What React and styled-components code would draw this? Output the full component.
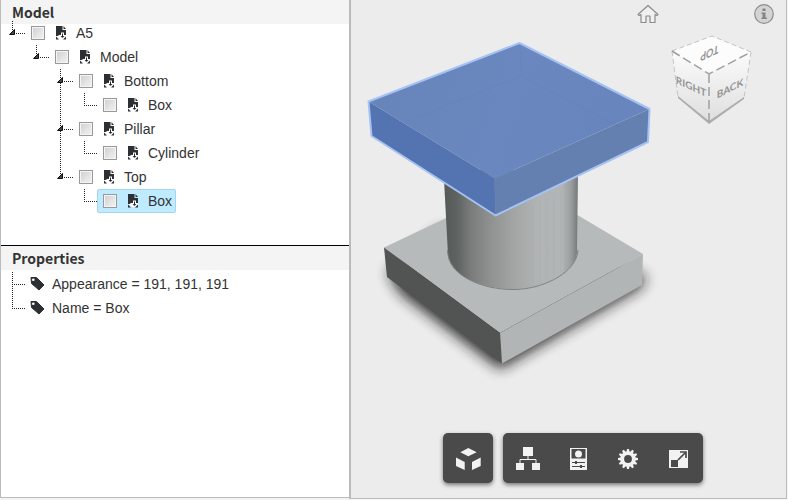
import React, { useState } from 'react';
import styled, { createGlobalStyle, css } from 'styled-components';

const tree = [
    { id: 'a5', label: 'A5', children: [
        { id: 'model', label: 'Model', children: [
            { id: 'bottom', label: 'Bottom', children: [{ id: 'bottom-box', label: 'Box' }] },
            { id: 'pillar', label: 'Pillar', children: [{ id: 'cylinder', label: 'Cylinder' }] },
            { id: 'top', label: 'Top', children: [{ id: 'top-box', label: 'Box' }] },
        ] },
    ] },
];

const properties = ['Appearance = 191, 191, 191', 'Name = Box'];

const PartIcon = () => (
    <svg width="12" height="14" viewBox="0 0 12 14" aria-hidden="true">
        <path d="M1 0H7.500V4H11V10H1Z" fill="#2d3033" />
        <path d="M8.500 0L11 3H8.500Z" fill="#2d3033" />
        <path d="M6 6.500H9V9H11V11L8 13H5L2 10.500L4 9H6Z" fill="#fff" />
        <path d="M7 7.500H8V10H9.500L7.500 12L5.500 10H7Z" fill="#2d3033" />
        <path d="M1 10.500L4 13.500H1ZM11 10.500V13.500H8Z" fill="#2d3033" />
    </svg>
);

const TagIcon = () => (
    <svg width="15" height="15" viewBox="0 0 15 15" aria-hidden="true">
        <path d="M1 1.500L6.500 1.500L14 9L9 14L1.500 7.500Z" fill="#2d3033" stroke="#2d3033" strokeLinejoin="round" />
        <circle cx="3.300" cy="3.800" r="1.300" fill="#fff" />
    </svg>
);

const TreeNode = ({ node, selected, onSelect }) => {
    const [open, setOpen] = useState(true);

    return (
        <Item>
            {node.children && (
                <Toggle type="button" aria-label={`Toggle ${node.label}`} aria-expanded={open} onClick={() => setOpen(!open)}>
                    <svg width="6" height="6" viewBox="0 0 6 6">
                        <path d="M5.500 .5V5.500H.5Z" fill="#444" stroke="#111" />
                    </svg>
                </Toggle>
            )}
            <Node $selected={selected === node.id} onClick={() => onSelect(node.id)}>
                <Check type="checkbox" id={node.id} />
                <PartIcon />
                <NodeLabel htmlFor={node.id}>{node.label}</NodeLabel>
            </Node>
            {node.children && open && (
                <List>
                    {node.children.map(child => (
                        <TreeNode key={child.id} node={child} selected={selected} onSelect={onSelect} />
                    ))}
                </List>
            )}
        </Item>
    );
};

const Scene = () => (
    <SceneSvg viewBox="351 0 435 498" role="img" aria-label="Pillar model">
        <defs>
            <linearGradient id="pillarFill" x1="444" x2="578" y1="0" y2="0" gradientUnits="userSpaceOnUse">
                <stop offset="0" stopColor="#555957" />
                <stop offset=".1" stopColor="#5f6361" />
                <stop offset=".2" stopColor="#797c7b" />
                <stop offset=".35" stopColor="#8f9291" />
                <stop offset=".52" stopColor="#a2a5a4" />
                <stop offset=".7" stopColor="#b1b4b4" />
                <stop offset=".88" stopColor="#b2b5b5" />
                <stop offset=".95" stopColor="#999c9c" />
                <stop offset="1" stopColor="#747777" />
            </linearGradient>
            <linearGradient id="slabTop" x1="400" x2="600" y1="80" y2="150" gradientUnits="userSpaceOnUse">
                <stop offset="0" stopColor="#6785ba" />
                <stop offset=".5" stopColor="#6a88bf" />
                <stop offset="1" stopColor="#6885bd" />
            </linearGradient>
            <filter id="soft" x="-20%" y="-20%" width="140%" height="150%">
                <feGaussianBlur stdDeviation="7" />
            </filter>
        </defs>

        {/* ground shadow */}
        <path d="M388 272L400 293L500 369L640 288L646 278L560 230H440Z" fill="#1c1c1c" opacity=".9" filter="url(#soft)" />

        {/* base */}
        <path d="M384 247.500L522 182L643 254L500 333Z" fill="#b7baba" />
        <path d="M384 247.500L500 333L502 363.500L387 277Z" fill="#515452" />
        <path d="M500 333L643 254L642 285L502 363.500Z" fill="#b1b5b5" />

        {/* pillar */}
        <path d="M443.500 170L448 255C450 276 482 289 513 289C544 289 576 272 577 252L578 170Z" fill="url(#pillarFill)" />
        <path d="M447.500 250C448 276 482 289.500 513 289.500C544 289.500 577 272 578 250" fill="none" stroke="#7e8181" />
        <g stroke="#a8abab" strokeWidth="1" opacity=".5">
            <path d="M526 208V288M533 204V287M540 201V286M547 198V283M554 194V280M561 190V275M568 188V269" />
        </g>

        {/* selected top */}
        <path d="M368.500 101.500L519.500 43L649.500 109L494.500 178.500Z" fill="url(#slabTop)" />
        <path d="M368.500 101.500L494.500 178.500L495.500 215.500L371.500 136Z" fill="#5473b1" />
        <path d="M494.500 178.500L649.500 109L648 142L495.500 215.500Z" fill="#6480b1" />
        <path d="M520 43L521 76L371 136M521 76L648 142" fill="none" stroke="#5a79b2" opacity=".15" />
        <path d="M368.500 101.500L519.500 43L649.500 109L648 142L495.500 215.500L371.500 136Z" fill="none" stroke="#a5c2f2" strokeWidth="2" strokeLinejoin="round" />
    </SceneSvg>
);

const ViewCube = () => (
    <svg width="84" height="92" viewBox="670 34 84 92" role="img" aria-label="View cube">
        <defs>
            <linearGradient id="cubeSide" x1="0" x2="0" y1="0" y2="1">
                <stop offset="0" stopColor="#fbfbfb" />
                <stop offset="1" stopColor="#dedede" />
            </linearGradient>
        </defs>
        <path d="M672 51L712 36L751 52L709 74Z" fill="#fcfcfc" />
        <path d="M672 51L709 74V123L678 97Z" fill="url(#cubeSide)" />
        <path d="M709 74L751 52L744 98L709 123Z" fill="url(#cubeSide)" />
        <path d="M678 96L709 121L744 97V99L709 124L678 98Z" fill="#adadad" />
        <path d="M672 51L712 36L751 52M672 51L678 97M751 52L744 98" fill="none" stroke="#c4c4c4" strokeDasharray="5 3" />
        <path d="M672 51L709 74L751 52M709 74V123" fill="none" stroke="#a0a0a0" strokeWidth="1.500" strokeDasharray="9 4" />
        <CubeText transform="translate(691 90) skewY(25)">RIGHT</CubeText>
        <CubeText transform="translate(730 92) skewY(-27)">BACK</CubeText>
        <CubeText transform="translate(710 49) rotate(155) skewX(-30)">TOP</CubeText>
    </svg>
);

const HomeIcon = () => (
    <svg width="22" height="20" viewBox="0 0 22 20" aria-hidden="true">
        <path d="M4 10.500L2 11.500L1 10.500L11 1.500L21 10.500L20 11.500L18 10.500V18.500H13V12H9V18.500H4Z" fill="#f0f0f0" stroke="#8c8c8c" strokeWidth="1.200" strokeLinejoin="round" />
    </svg>
);

const InfoIcon = () => (
    <svg width="20" height="20" viewBox="0 0 20 20" aria-hidden="true">
        <circle cx="10" cy="10" r="9.300" fill="#d3d3d3" stroke="#8c8c8c" strokeWidth="1.200" />
        <path d="M8.500 4.500H11.500V7H8.500ZM7.500 8.500H11.500V13.500H13V15H7.500V13.500H8.500V10H7.500Z" fill="#858585" />
    </svg>
);

const ExplodeIcon = () => (
    <svg viewBox="0 0 50 50" aria-hidden="true">
        <path d="M17.300 19.200L25.300 15L33.700 19.200L25.300 23.300ZM13 24.500L21.700 29V37L13 33ZM37.700 24.500L29 29V37L37.700 33Z" fill="#f2f2f2" />
    </svg>
);

const StructureIcon = () => (
    <svg viewBox="0 0 50 50" aria-hidden="true">
        <path d="M20 14H30V23H20ZM13 30H21V37H13ZM29 30H37V37H29Z" fill="#f2f2f2" />
        <path d="M25 23V26.500M17 30V26.500H33V30" fill="none" stroke="#f2f2f2" />
    </svg>
);

const PropertiesIcon = () => (
    <svg viewBox="0 0 50 50" aria-hidden="true">
        <path d="M17 15H34V37H17Z" fill="#f2f2f2" />
        <path d="M18.500 16H32.500V25.500H18.500Z" fill="#4a4a4a" />
        <circle cx="25.500" cy="21" r="3.500" fill="#f2f2f2" />
        <path d="M19 29.500H32M19 33.500H32" stroke="#4a4a4a" />
        <path d="M22 28H24V31H22ZM27 32H29V35H27Z" fill="#4a4a4a" />
    </svg>
);

const teeth = [0, 30, 60, 90, 120, 150, 180, 210, 240, 270, 300, 330];

const GearIcon = () => (
    <svg viewBox="0 0 50 50" aria-hidden="true">
        <circle cx="25" cy="26" r="5.800" fill="none" stroke="#f2f2f2" strokeWidth="3.800" />
        {teeth.map(angle => (
            <path key={angle} d="M24 16H26L26.700 19.500H23.300Z" fill="#f2f2f2" transform={`rotate(${angle} 25 26)`} />
        ))}
    </svg>
);

const ExpandIcon = () => (
    <svg viewBox="0 0 50 50" aria-hidden="true">
        <path d="M16 17H35V35H16Z" fill="#f2f2f2" />
        <path d="M18 27H25V34H18Z" fill="#4a4a4a" />
        <path d="M25 27L32 20M27 19H33V25" fill="none" stroke="#4a4a4a" strokeWidth="1.700" />
    </svg>
);

const App = () => {
    const [selected, setSelected] = useState('top-box');

    return (
        <Page>
            <GlobalStyle />
            <Sidebar>
                <Panel $grow={35}>
                    <Title>Model</Title>
                    <ModelTree>
                        {tree.map(node => (
                            <TreeNode key={node.id} node={node} selected={selected} onSelect={setSelected} />
                        ))}
                    </ModelTree>
                </Panel>
                <Panel $grow={36} $divided>
                    <Title>Properties</Title>
                    <PropertyList>
                        {properties.map(text => (
                            <Item key={text}>
                                <Property>
                                    <TagIcon />
                                    <span>{text}</span>
                                </Property>
                            </Item>
                        ))}
                    </PropertyList>
                </Panel>
            </Sidebar>

            <Viewer>
                <Scene />
                <Navigation>
                    <IconButton type="button" aria-label="Home"><HomeIcon /></IconButton>
                    <ViewCube />
                    <IconButton type="button" aria-label="Information"><InfoIcon /></IconButton>
                </Navigation>
                <Toolbar>
                    <Group>
                        <Tool type="button" aria-label="Explode model"><ExplodeIcon /></Tool>
                    </Group>
                    <Group>
                        <Tool type="button" aria-label="Model structure"><StructureIcon /></Tool>
                        <Tool type="button" aria-label="Properties"><PropertiesIcon /></Tool>
                        <Tool type="button" aria-label="Settings"><GearIcon /></Tool>
                        <Tool type="button" aria-label="Full screen"><ExpandIcon /></Tool>
                    </Group>
                </Toolbar>
            </Viewer>
        </Page>
    );
};

const GlobalStyle = createGlobalStyle`
    * {
        box-sizing: border-box;
    }

    body {
        margin: 0;
        background-color: #f4f4f4;
        color: #333;
        font-family: 'Liberation Sans', Arial, sans-serif;
        font-size: 14px;
    }
`

const Page = styled.div`
    display: grid;
    grid-template-columns: 349fr 438fr;
    min-height: 100vh;
    padding: 0 1px 1px 0;
`

const Sidebar = styled.aside`
    display: flex;
    flex-direction: column;
    margin-bottom: 1px;
    border-left: 1px solid #bbb;
    border-bottom: 1px solid #bbb;
    background-color: #fff;
`

const Panel = styled.section`
    flex: ${({ $grow }) => $grow} 1 0;
    ${({ $divided }) => $divided && css`
        border-top: 1px solid #000;
    `}
`

const Title = styled.h2`
    margin: 0;
    padding-left: 11px;
    background-color: #f4f4f4;
    font-family: 'Noto Sans CJK SC', 'Open Sans', sans-serif;
    font-size: 14px;
    font-weight: 700;
    line-height: 24px;
`

const List = styled.ul`
    margin: 0;
    padding: 0;
    list-style: none;
`

const ModelTree = styled(List)`
    margin-top: -3px;
`

const PropertyList = styled(List)`
    margin-top: 2px;
`

const Item = styled.li`
    position: relative;
    padding-left: 24px;

    &::before {
        content: '';
        position: absolute;
        top: 0;
        bottom: 0;
        left: 11px;
        width: 1px;
        background: repeating-linear-gradient(#222 0 1px, transparent 1px 2px);
    }

    &:last-child::before {
        bottom: auto;
        height: 12px;
    }

    &::after {
        content: '';
        position: absolute;
        top: 12px;
        left: 11px;
        width: 13px;
        height: 1px;
        background: repeating-linear-gradient(90deg, #222 0 1px, transparent 1px 2px);
    }
`

const Toggle = styled.button`
    position: absolute;
    z-index: 1;
    top: 8px;
    left: 8px;
    display: flex;
    padding: 0;
    border: 0;
    background: none;
    cursor: pointer;
`

const Node = styled.div`
    display: inline-flex;
    align-items: center;
    height: 24px;
    padding: 0 3px 0 5px;
    border: 1px solid transparent;
    vertical-align: top;

    ${({ $selected }) => $selected && css`
        border-color: #a5d5ea;
        border-radius: 2px;
        background-color: #beebff;
    `}
`

const Check = styled.input`
    appearance: none;
    width: 14px;
    height: 14px;
    margin: 0 10px 0 0;
    border: 1px solid #999;
    background: linear-gradient(135deg, #cfcfcf, #f4f4f4);
    box-shadow: inset 0 0 0 1px #f4f4f4;

    &:checked {
        background: #777;
    }
`

const NodeLabel = styled.label`
    margin-left: 9px;
    line-height: 20px;
`

const Property = styled.div`
    display: flex;
    align-items: center;
    gap: 7px;
    height: 24px;
    padding-left: 5px;
`

const Viewer = styled.main`
    position: relative;
    border: solid #bbb;
    border-width: 0 1px 1px 2px;
    background-color: #ececec;
`

const SceneSvg = styled.svg`
    position: absolute;
    width: 100%;
    height: 100%;
`

const Navigation = styled.div`
    position: absolute;
    top: 4px;
    right: 12px;
    display: flex;
    align-items: flex-start;

    > svg {
        margin: 30px 0 0 11px;
    }
`

const IconButton = styled.button`
    display: flex;
    padding: 0;
    border: 0;
    background: none;
    cursor: pointer;
`

const CubeText = styled.text`
    fill: #939393;
    font-family: Lato, 'Open Sans', sans-serif;
    font-size: 10px;
    font-weight: 700;
    text-anchor: middle;
`

const Toolbar = styled.div`
    position: absolute;
    right: 0;
    bottom: 15px;
    left: 0;
    display: flex;
    justify-content: center;
    padding-right: 1px;
`

const Group = styled.div`
    display: flex;
    margin-left: 10px;
    border-radius: 5px;
    background-color: #4a4a4a;
    box-shadow: 0 2px 4px rgba(0, 0, 0, .5);
`

const Tool = styled.button`
    width: 50px;
    height: 50px;
    padding: 0;
    border: 0;
    background: none;
    cursor: pointer;
`

export default App;
